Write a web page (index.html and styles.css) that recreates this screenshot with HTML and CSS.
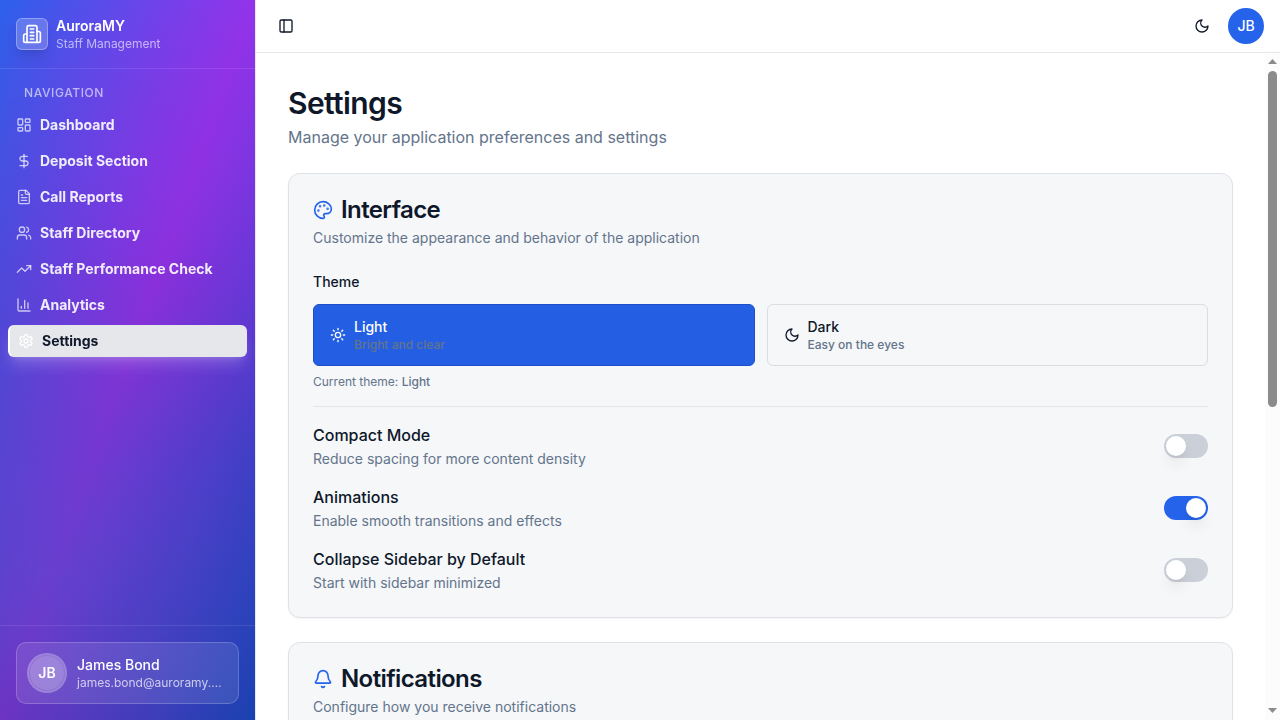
FILE: index.html
```html
<!DOCTYPE html>
<html lang="en">
<head>
<meta charset="utf-8">
<title>AuroraMY</title>
<link rel="stylesheet" href="styles.css">
</head>
<body>
<div class="app">
  <aside class="sidebar">
    <header class="brand">
      <div class="brand-logo"><svg class="icon" width="20" height="20" viewBox="0 0 24 24"><path d="M6 22V4a2 2 0 0 1 2-2h8a2 2 0 0 1 2 2v18Z"/><path d="M6 12H4a2 2 0 0 0-2 2v6a2 2 0 0 0 2 2h2"/><path d="M18 9h2a2 2 0 0 1 2 2v9a2 2 0 0 1-2 2h-2"/><path d="M10 6h4M10 10h4M10 14h4M10 18h4"/></svg></div>
      <div class="brand-text">
        <div class="brand-name">AuroraMY</div>
        <div class="brand-sub">Staff Management</div>
      </div>
    </header>
    <nav class="nav">
      <div class="nav-label">NAVIGATION</div>
      <div class="nav-list">
        <a class="nav-item"><svg class="icon" width="16" height="16" viewBox="0 0 24 24"><rect width="7" height="9" x="3" y="3" rx="1"/><rect width="7" height="5" x="14" y="3" rx="1"/><rect width="7" height="9" x="14" y="12" rx="1"/><rect width="7" height="5" x="3" y="16" rx="1"/></svg><span>Dashboard</span></a>
        <a class="nav-item"><svg class="icon" width="16" height="16" viewBox="0 0 24 24"><path d="M12 2v20"/><path d="M17 5H9.5a3.5 3.5 0 0 0 0 7h5a3.5 3.5 0 0 1 0 7H6"/></svg><span>Deposit Section</span></a>
        <a class="nav-item"><svg class="icon" width="16" height="16" viewBox="0 0 24 24"><path d="M15 2H6a2 2 0 0 0-2 2v16a2 2 0 0 0 2 2h12a2 2 0 0 0 2-2V7Z"/><path d="M14 2v4a2 2 0 0 0 2 2h4"/><path d="M10 9H8M16 13H8M16 17H8"/></svg><span>Call Reports</span></a>
        <a class="nav-item"><svg class="icon" width="16" height="16" viewBox="0 0 24 24"><path d="M16 21v-2a4 4 0 0 0-4-4H6a4 4 0 0 0-4 4v2"/><circle cx="9" cy="7" r="4"/><path d="M22 21v-2a4 4 0 0 0-3-3.87"/><path d="M16 3.13a4 4 0 0 1 0 7.75"/></svg><span>Staff Directory</span></a>
        <a class="nav-item"><svg class="icon" width="16" height="16" viewBox="0 0 24 24"><path d="m22 7-8.5 8.5-5-5L2 17"/><path d="M16 7h6v6"/></svg><span>Staff Performance Check</span></a>
        <a class="nav-item"><svg class="icon" width="16" height="16" viewBox="0 0 24 24"><path d="M3 3v16a2 2 0 0 0 2 2h16"/><path d="M18 17V9M13 17V5M8 17v-3"/></svg><span>Analytics</span></a>
        <a class="nav-item nav-item-active"><svg class="icon" width="16" height="16" viewBox="0 0 24 24"><path d="M12.22 2h-.44a2 2 0 0 0-2 2v.18a2 2 0 0 1-1 1.73l-.43.25a2 2 0 0 1-2 0l-.15-.08a2 2 0 0 0-2.73.73l-.22.38a2 2 0 0 0 .73 2.73l.15.1a2 2 0 0 1 1 1.72v.51a2 2 0 0 1-1 1.74l-.15.09a2 2 0 0 0-.73 2.73l.22.38a2 2 0 0 0 2.73.73l.15-.08a2 2 0 0 1 2 0l.43.25a2 2 0 0 1 1 1.73V20a2 2 0 0 0 2 2h.44a2 2 0 0 0 2-2v-.18a2 2 0 0 1 1-1.73l.43-.25a2 2 0 0 1 2 0l.15.08a2 2 0 0 0 2.73-.73l.22-.39a2 2 0 0 0-.73-2.73l-.15-.08a2 2 0 0 1-1-1.74v-.5a2 2 0 0 1 1-1.74l.15-.09a2 2 0 0 0 .73-2.73l-.22-.38a2 2 0 0 0-2.73-.73l-.15.08a2 2 0 0 1-2 0l-.43-.25a2 2 0 0 1-1-1.73V4a2 2 0 0 0-2-2z"/><circle cx="12" cy="12" r="3"/></svg><span>Settings</span></a>
      </div>
    </nav>
    <footer class="side-footer">
      <div class="user-card">
        <div class="user-avatar">JB</div>
        <div class="user-text">
          <div class="user-name">James Bond</div>
          <div class="user-mail">james.bond@auroramy.…</div>
        </div>
      </div>
    </footer>
  </aside>

  <div class="content">
    <header class="topbar">
      <svg class="icon" width="16" height="16" viewBox="0 0 24 24"><rect width="18" height="18" x="3" y="3" rx="2"/><path d="M9 3v18"/></svg>
      <div class="topbar-right">
        <svg class="icon" width="16" height="16" viewBox="0 0 24 24"><path d="M12 3a6 6 0 0 0 9 9 9 9 0 1 1-9-9Z"/></svg>
        <div class="avatar">JB</div>
      </div>
    </header>
    <div class="viewport">
      <main class="page">
        <div class="page-head">
          <h1>Settings</h1>
          <p>Manage your application preferences and settings</p>
        </div>
        <section class="card">
          <h2><svg class="icon" width="20" height="20" viewBox="0 0 24 24"><circle cx="13.5" cy="6.5" r=".5" fill="currentColor"/><circle cx="17.5" cy="10.5" r=".5" fill="currentColor"/><circle cx="8.5" cy="7.5" r=".5" fill="currentColor"/><circle cx="6.5" cy="12.5" r=".5" fill="currentColor"/><path d="M12 2C6.5 2 2 6.5 2 12s4.5 10 10 10c.926 0 1.648-.746 1.648-1.688 0-.437-.18-.835-.437-1.125-.29-.289-.438-.652-.438-1.125a1.64 1.64 0 0 1 1.668-1.668h1.996c3.051 0 5.555-2.503 5.555-5.554C21.965 6.012 17.461 2 12 2z"/></svg>Interface</h2>
          <p class="card-desc">Customize the appearance and behavior of the application</p>
          <div class="theme">
            <div class="theme-label">Theme</div>
            <div class="theme-options">
              <div class="option option-selected">
                <svg class="icon" width="16" height="16" viewBox="0 0 24 24"><circle cx="12" cy="12" r="4"/><path d="M12 2v2M12 20v2M4.93 4.93l1.41 1.41M17.66 17.66l1.41 1.41M2 12h2M20 12h2M6.34 17.66l-1.41 1.41M19.07 4.93l-1.41 1.41"/></svg>
                <div><div class="option-name">Light</div><div class="option-sub">Bright and clear</div></div>
              </div>
              <div class="option">
                <svg class="icon" width="16" height="16" viewBox="0 0 24 24"><path d="M12 3a6 6 0 0 0 9 9 9 9 0 1 1-9-9Z"/></svg>
                <div><div class="option-name">Dark</div><div class="option-sub">Easy on the eyes</div></div>
              </div>
            </div>
            <div class="theme-current">Current theme: <b>Light</b></div>
          </div>
          <div class="rows">
            <div class="row"><div><div class="row-name">Compact Mode</div><div class="row-sub">Reduce spacing for more content density</div></div><div class="switch"><i></i></div></div>
            <div class="row"><div><div class="row-name">Animations</div><div class="row-sub">Enable smooth transitions and effects</div></div><div class="switch switch-on"><i></i></div></div>
            <div class="row"><div><div class="row-name">Collapse Sidebar by Default</div><div class="row-sub">Start with sidebar minimized</div></div><div class="switch"><i></i></div></div>
          </div>
        </section>
        <section class="card">
          <h2><svg class="icon" width="20" height="20" viewBox="0 0 24 24"><path d="M10.268 21a2 2 0 0 0 3.464 0"/><path d="M3.262 15.326A1 1 0 0 0 4 17h16a1 1 0 0 0 .74-1.673C19.41 13.956 18 12.499 18 8A6 6 0 0 0 6 8c0 4.499-1.411 5.956-2.738 7.326"/></svg>Notifications</h2>
          <p class="card-desc">Configure how you receive notifications</p>
        </section>
      </main>
      <div class="scrollbar">
        <svg width="15" height="18" viewBox="0 0 15 18"><path d="M3 11L7.500 6L12 11Z" fill="#8b8b8b"/></svg>
        <div class="thumb"></div>
        <svg class="scroll-down" width="15" height="18" viewBox="0 0 15 18"><path d="M3 6L7.500 11L12 6Z" fill="#8b8b8b"/></svg>
      </div>
    </div>
  </div>
</div>
</body>
</html>
```
FILE: styles.css
```css
* { box-sizing: border-box; }
body, h1, h2, p { margin: 0; }
body {
  height: 720px;
  overflow: hidden;
  background: #fff;
  color: #0f172a;
  font: 14px/20px Inter, sans-serif;
}
.icon {
  flex: none;
  display: block;
  fill: none;
  stroke: currentColor;
  stroke-width: 2;
  stroke-linecap: round;
  stroke-linejoin: round;
}
.app { display: flex; height: 720px; }

.sidebar {
  flex: none;
  width: 256px;
  display: flex;
  flex-direction: column;
  color: #fff;
  border-right: 1px solid #e5e7f3;
  background:
    radial-gradient(circle at 20% 80%, rgba(59,110,230,.3), transparent 50%),
    radial-gradient(circle at 80% 20%, rgba(147,51,234,.3), transparent 50%),
    linear-gradient(to bottom, transparent, rgba(0,0,0,.2)),
    linear-gradient(to bottom right, #2563eb, #9333ea, #1d4ed8);
  background-origin: padding-box;
  background-clip: padding-box;
  will-change: transform;
}
.brand {
  display: flex;
  align-items: center;
  gap: 8px;
  height: 69px;
  padding: 0 16px;
  border-bottom: 1px solid rgba(255,255,255,.1);
}
.brand-logo {
  display: grid;
  place-items: center;
  width: 32px;
  height: 32px;
  border-radius: 6px;
  border: 1px solid rgba(255,255,255,.3);
  background: rgba(255,255,255,.2);
  box-shadow: 0 10px 15px -3px rgba(0,0,0,.1), 0 4px 6px -4px rgba(0,0,0,.1);
}
.brand-name { font-weight: 600; line-height: 20px; }
.brand-sub { font-size: 12px; line-height: 16px; color: rgba(255,255,255,.6); }
.nav { flex: 1; padding: 8px; }
.nav-label {
  padding: 0 16px;
  height: 32px;
  line-height: 32px;
  font-size: 12px;
  font-weight: 500;
  letter-spacing: .6px;
  color: rgba(255,255,255,.6);
}
.nav-list { display: flex; flex-direction: column; gap: 4px; }
.nav-item {
  display: flex;
  align-items: center;
  gap: 8px;
  height: 32px;
  padding: 0 8px;
  border-radius: 6px;
  font-weight: 700;
  color: rgba(255,255,255,.9);
}
.nav-item .icon { color: rgba(255,255,255,.7); }
.nav-item-active {
  color: #0f172a;
  background: #e5e7eb;
  border-left: 2px solid #fff;
  box-shadow: 0 10px 15px -3px rgba(255,255,255,.2), 0 4px 6px -4px rgba(255,255,255,.2);
}
.nav-item-active .icon { color: #fff; }
.side-footer { padding: 16px; border-top: 1px solid rgba(255,255,255,.1); }
.user-card {
  display: flex;
  align-items: center;
  gap: 10px;
  height: 62px;
  padding: 0 10px;
  border: 1px solid rgba(255,255,255,.2);
  border-radius: 10px;
  background: rgba(255,255,255,.1);
}
.user-avatar {
  flex: none;
  display: grid;
  place-items: center;
  width: 40px;
  height: 40px;
  border-radius: 50%;
  border: 2px solid rgba(255,255,255,.3);
  background: rgba(255,255,255,.3);
  background-clip: padding-box;
  box-shadow: inset 0 0 0 1px rgba(90,50,160,.15);
  font-weight: 600;
}
.user-text { min-width: 0; }
.user-name { font-weight: 500; line-height: 20px; }
.user-mail {
  white-space: nowrap;
  font-size: 12px;
  line-height: 16px;
  color: rgba(255,255,255,.7);
}

.content { flex: 1; min-width: 0; display: flex; flex-direction: column; }
.topbar {
  flex: none;
  display: flex;
  align-items: center;
  justify-content: space-between;
  height: 53px;
  padding: 0 16px 0 22px;
  border-bottom: 1px solid #e5e7eb;
}
.topbar-right { display: flex; align-items: center; gap: 18px; }
.avatar {
  display: grid;
  place-items: center;
  width: 36px;
  height: 36px;
  border-radius: 50%;
  background: #2563eb;
  color: #fff;
  font-weight: 500;
}
.viewport { flex: 1; min-height: 0; display: flex; }
.page {
  flex: 1;
  height: 667px;
  overflow: hidden;
  padding: 32px;
  display: flex;
  flex-direction: column;
  gap: 24px;
}
.page-head h1 { font-size: 30px; line-height: 36px; font-weight: 600; letter-spacing: -.6px; }
.page-head p { font-size: 16px; line-height: 24px; margin-top: 4px; color: #64748b; }
.card {
  flex: none;
  padding: 24px;
  border: 1px solid #dfe3e8;
  border-radius: 12px;
  background: #f5f7f9;
  box-shadow: 0 1px 2px rgba(0,0,0,.05);
}
.card h2 {
  display: flex;
  align-items: center;
  gap: 8px;
  font-size: 24px;
  line-height: 24px;
  font-weight: 600;
  letter-spacing: -.6px;
}
.card h2 .icon { color: #2563eb; }
.card-desc { margin-top: 6px; color: #64748b; }
.theme { margin-top: 24px; padding-bottom: 16px; border-bottom: 1px solid #e2e5e9; }
.theme-label { font-weight: 500; }
.theme-options { display: grid; grid-template-columns: 1fr 1fr; gap: 12px; margin-top: 12px; }
.option {
  display: flex;
  align-items: center;
  gap: 8px;
  height: 62px;
  padding: 0 16px;
  border: 1px solid #dadde2;
  border-radius: 6px;
  font-weight: 500;
}
.option-selected { background: #245fe3; border-color: #1c4fc9; color: #fff; }
.option-sub { font-size: 12px; line-height: 16px; color: #64748b; }
.theme-current { margin-top: 8px; font-size: 12px; line-height: 16px; color: #64748b; }
.theme-current b { font-weight: 500; }
.rows { display: flex; flex-direction: column; gap: 16px; padding-top: 16px; }
.row { display: flex; align-items: center; justify-content: space-between; height: 46px; }
.row-name { font-size: 16px; line-height: 24px; font-weight: 500; }
.row-sub { line-height: 20px; margin-top: 2px; color: #64748b; }
.switch {
  display: flex;
  width: 44px;
  height: 24px;
  padding: 2px;
  border-radius: 12px;
  background: #cbcfd8;
}
.switch i {
  width: 20px;
  height: 20px;
  border-radius: 50%;
  background: #fff;
  box-shadow: 0 10px 15px -3px rgba(0,0,0,.1), 0 4px 6px -4px rgba(0,0,0,.1);
}
.switch-on { justify-content: flex-end; background: #2563eb; }
.scrollbar {
  flex: none;
  display: flex;
  flex-direction: column;
  align-items: center;
  width: 15px;
  background: #fcfcfc;
}
.thumb { width: 9px; height: 336px; border-radius: 4.5px; background: #8b8b8b; }
.scroll-down { margin-top: auto; }
```
